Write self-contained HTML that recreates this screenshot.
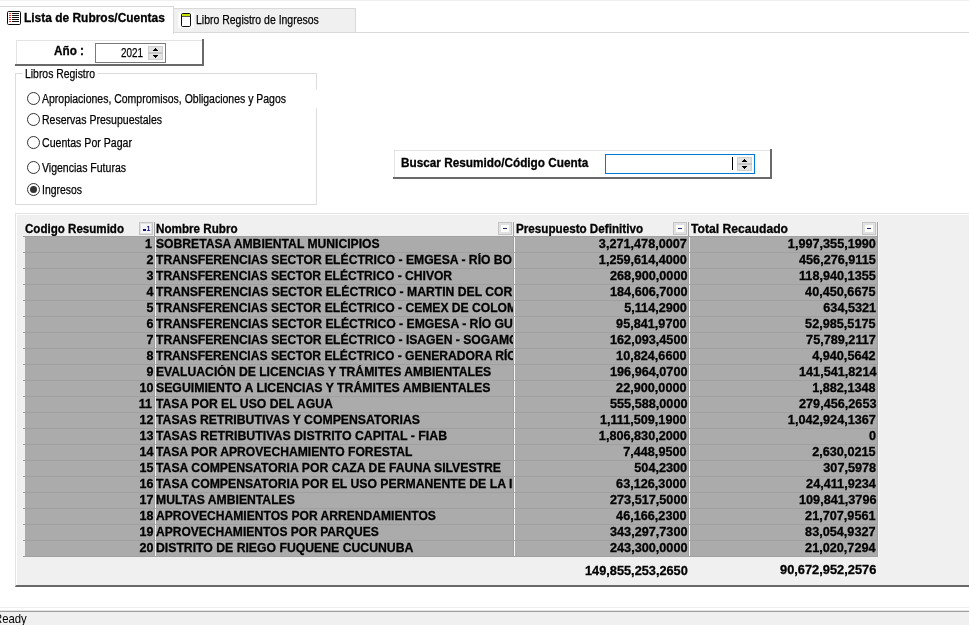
<!DOCTYPE html>
<html lang="es"><head><meta charset="utf-8"><title>Lista de Rubros/Cuentas</title>
<style>
*{box-sizing:border-box;margin:0;padding:0}
html,body{width:969px;height:625px;overflow:hidden;background:#fff}
body{font-family:"Liberation Sans",Arial,sans-serif;font-size:12.5px;color:#000;line-height:15px}
#app{position:absolute;left:0;top:0;width:969px;height:625px;overflow:hidden;background:#fff;will-change:transform}
.abs{position:absolute}
.b{font-weight:bold}
.t{position:absolute;white-space:nowrap;transform-origin:0 0;-webkit-text-stroke:0.25px #000}
.t.b{-webkit-text-stroke:0.3px #000}
#t_ready{font-size:13px;-webkit-text-stroke:0}
svg{position:absolute;shape-rendering:crispEdges}
#topstrip{left:0;top:0;width:969px;height:1px;background:#f0f0f0}
#topline{left:0;top:6px;width:174px;height:1px;background:#d9d9d9}
#tabline{left:0;top:32px;width:969px;height:1px;background:#d9d9d9}
#tab1{left:0;top:7px;width:174px;height:27px;background:#fff;border-right:1px solid #d9d9d9}
#tab2{left:174px;top:8px;width:182px;height:25px;background:#f0f0f0;border:1px solid #d9d9d9;border-left:none}
#anio{left:15px;top:39px;width:189px;height:27px;background:#fff;border-right:2px solid #696969;border-bottom:2px solid #696969}
.pnl::before{content:"";position:absolute;left:1px;top:1px;right:0;bottom:0;border-left:1px solid #e3e3e3;border-top:1px solid #e3e3e3}
#spin1{left:95px;top:43px;width:71px;height:20px;border:1px solid #7a7a7a;background:#fff}
#grp{left:15px;top:73px;width:302px;height:132px;border:1px solid #dcdcdc;background:#fff}
.radio{position:absolute;width:13px;height:13px;border:1px solid #333;border-radius:50%;background:#fff}
.radio.on::after{content:"";position:absolute;left:2px;top:2px;width:7px;height:7px;border-radius:50%;background:#333}
#srch{left:393px;top:149px;width:379px;height:30px;background:#fff;border-right:2px solid #696969;border-bottom:2px solid #696969}
#spin2{left:605px;top:154px;width:150px;height:20px;border:1px solid #0078d7;background:#fff}
#gp{left:15px;top:213px;width:960px;height:374px;background:#f0f0f0;border-top:1px solid #e3e3e3;border-left:1px solid #e3e3e3;border-bottom:2px solid #696969;box-shadow:inset 1px 1px 0 #fff}
.r{position:absolute;left:23px;width:854px;height:16px;border-top:1px solid #a0a0a0;font-weight:bold;-webkit-text-stroke:0.3px #000}
#rend{position:absolute;left:23px;top:556px;width:854px;height:1px;background:#a0a0a0}
.c{position:absolute;top:0;height:15px;background:#ababab;overflow:hidden;white-space:nowrap;line-height:15px;text-align:right;padding-right:1px}
.c1{left:2px;width:129px;padding-right:0.6px}
.c1.e1{padding-right:2px}
.c2{left:133px;width:357px;text-align:left;padding-left:0.4px;padding-right:0}
.c3{left:492px;width:173px}
.c4{left:667px;width:187px}
.sl{display:inline-block;transform-origin:0 0}
.sr{display:inline-block;transform-origin:100% 0}
.vg{position:absolute;top:222px;height:335px;width:1px;background:#a0a0a0}
.vw{position:absolute;top:237px;height:319px;width:1px;background:repeating-linear-gradient(to bottom,#f4f4f4 0,#f4f4f4 15px,#b4b4b4 15px,#b4b4b4 16px)}
.hb{position:absolute;top:222px;width:14px;height:13px;border:1px solid #c4c4c4;background:#e1e1e1}
.hb i{position:absolute;left:2px;top:2px;width:8px;height:7px;background:#fff}
.hb b{position:absolute;left:4px;top:5px;width:4px;height:1px;background:#1c2a6e}
.hb span{position:absolute;left:6.5px;top:1px;font-size:7px;line-height:9px;font-weight:bold;color:#10107a}
.hb u{position:absolute;left:3px;top:6px;width:3px;height:2px;background:#10107a}
#st1{left:0;top:607px;width:969px;height:1px;background:#efefef}
#st2{left:0;top:610px;width:969px;height:1px;background:#e4e4e4}
#st3{left:0;top:611px;width:969px;height:1px;background:#a0a0a0}
#status{left:0;top:612px;width:969px;height:13px;background:#f0f0f0}
</style></head><body><div id="app">
<div id="topstrip" class="abs"></div>
<div id="topline" class="abs"></div>
<div id="tabline" class="abs"></div>
<div id="tab1" class="abs"></div>
<div id="tab2" class="abs"></div>
<svg style="left:6px;top:10px" width="16" height="16" viewBox="0 0 16 16">
<rect x="1.5" y="1.5" width="13" height="13" rx="1.1" fill="#fff" stroke="#0a0a0a" stroke-width="1" shape-rendering="geometricPrecision"/>
<path d="M6 3h7v1h-7zM6 5h7v1h-7zM6 7h7v1h-7zM6 9h7v1h-7zM6 11h7v1h-7z" fill="#111"/>
<path d="M3 3h2v1h-2zM3 5h2v1h-2zM3 7h2v1h-2zM3 9h2v1h-2zM3 11h2v1h-2z" fill="#e8241a"/>
</svg>
<div class="t b" id="t_tab1" style="left:24.2px;top:11px;transform:scaleX(0.9562)">Lista de Rubros/Cuentas</div>
<div class="abs" style="left:178px;top:12px;width:16px;height:16px;background:#fbfbfb"></div>
<svg style="left:180px;top:12px" width="12" height="16" viewBox="0 0 12 16">
<rect x="1.5" y="1.5" width="9" height="13" rx="1.1" fill="#fff" stroke="#0a0a0a" stroke-width="1" shape-rendering="geometricPrecision"/>
<rect x="2" y="2" width="8" height="2" fill="#c3e000"/>
<rect x="2" y="4" width="8" height="1" fill="#555"/>
</svg>
<div class="t" id="t_tab2" style="left:196.2px;top:13px;transform:scaleX(0.8376)">Libro Registro de Ingresos</div>

<div id="anio" class="abs pnl"></div>
<div class="t b" id="t_anio" style="left:54px;top:44px;transform:scaleX(0.9393)">Año :</div>
<div id="spin1" class="abs"></div>
<div class="t" id="t_y2021" style="left:121px;top:46px;transform:scaleX(0.7910)">2021</div>
<svg style="left:148px;top:46px" width="15" height="14" viewBox="0 0 15 14">
<rect x="0" y="0" width="15" height="14" fill="#e3e3e3"/>
<rect x="0.5" y="0.5" width="14" height="13" fill="none" stroke="#d0d0d0"/>
<rect x="0" y="6" width="15" height="2" fill="#c6c6c6"/>
<path d="M7 2h1v1h-1zM6 3h3v1h-3zM5 4h5v1h-5zM5 9h5v1h-5zM6 10h3v1h-3zM7 11h1v1h-1z" fill="#000"/>
</svg>

<div id="grp" class="abs"></div>
<div class="abs" style="left:23px;top:70px;width:74px;height:8px;background:#fff"></div>
<div class="t" id="t_grp" style="left:25px;top:67px;transform:scaleX(0.8326)">Libros Registro</div>
<div class="abs" style="left:40px;top:89px;width:280px;height:19px;background:#fff"></div>
<div class="radio" style="left:27px;top:92px"></div>
<div class="t" id="t_r1" style="left:42px;top:92px;transform:scaleX(0.8381)">Apropiaciones, Compromisos, Obligaciones y Pagos</div>
<div class="radio" style="left:27px;top:113px"></div>
<div class="t" id="t_r2" style="left:42px;top:113px;transform:scaleX(0.8425)">Reservas Presupuestales</div>
<div class="radio" style="left:27px;top:136px"></div>
<div class="t" id="t_r3" style="left:42px;top:136px;transform:scaleX(0.8466)">Cuentas Por Pagar</div>
<div class="radio" style="left:27px;top:161px"></div>
<div class="t" id="t_r4" style="left:42px;top:161px;transform:scaleX(0.8414)">Vigencias Futuras</div>
<div class="radio on" style="left:27px;top:183px"></div>
<div class="t" id="t_r5" style="left:42px;top:183px;transform:scaleX(0.8341)">Ingresos</div>

<div id="srch" class="abs pnl"></div>
<div class="t b" id="t_srch" style="left:400.8px;top:156px;transform:scaleX(0.9424)">Buscar Resumido/Código Cuenta</div>
<div id="spin2" class="abs"></div>
<div class="abs" style="left:732px;top:157px;width:1px;height:13px;background:#000"></div>
<svg style="left:737px;top:157px" width="15" height="14" viewBox="0 0 15 14">
<rect x="0" y="0" width="15" height="14" fill="#e3e3e3"/>
<rect x="0.5" y="0.5" width="14" height="13" fill="none" stroke="#d0d0d0"/>
<rect x="0" y="6" width="15" height="2" fill="#c6c6c6"/>
<path d="M7 2h1v1h-1zM6 3h3v1h-3zM5 4h5v1h-5zM5 9h5v1h-5zM6 10h3v1h-3zM7 11h1v1h-1z" fill="#000"/>
</svg>

<div id="gp" class="abs"></div>
<div class="t b" id="t_h1" style="left:25px;top:222px;transform:scaleX(0.9256)">Codigo Resumido</div>
<div class="hb" style="left:139px"><i style="background:#f6f6f6;left:1px;top:1px;width:10px;height:9px"></i><u></u><span>1</span></div>
<div class="t b" id="t_h2" style="left:156.4px;top:222px;transform:scaleX(0.9326)">Nombre Rubro</div>
<div class="hb" style="left:498px"><i></i><b></b></div>
<div class="t b" id="t_h3" style="left:516px;top:222px;transform:scaleX(0.9329)">Presupuesto Definitivo</div>
<div class="hb" style="left:673px"><i></i><b></b></div>
<div class="t b" id="t_h4" style="left:691px;top:222px;transform:scaleX(0.9721)">Total Recaudado</div>
<div class="hb" style="left:862px"><i></i><b></b></div>
<div class="r" style="top:236px"><div class="c c1 e1"><span class="sr" style="transform:scaleX(1.0)">1</span></div><div class="c c2"><span class="sl" style="transform:scaleX(0.9707)">SOBRETASA AMBIENTAL MUNICIPIOS</span></div><div class="c c3"><span class="sr" style="transform:scaleX(1.013)">3,271,478,0007</span></div><div class="c c4"><span class="sr" style="transform:scaleX(1.013)">1,997,355,1990</span></div></div>
<div class="r" style="top:252px"><div class="c c1"><span class="sr" style="transform:scaleX(1.0)">2</span></div><div class="c c2"><span class="sl" style="transform:scaleX(0.9709)">TRANSFERENCIAS SECTOR ELÉCTRICO - EMGESA - RÍO BO</span></div><div class="c c3"><span class="sr" style="transform:scaleX(1.013)">1,259,614,4000</span></div><div class="c c4"><span class="sr" style="transform:scaleX(1.013)">456,276,9115</span></div></div>
<div class="r" style="top:268px"><div class="c c1"><span class="sr" style="transform:scaleX(1.0)">3</span></div><div class="c c2"><span class="sl" style="transform:scaleX(0.9675)">TRANSFERENCIAS SECTOR ELÉCTRICO - CHIVOR</span></div><div class="c c3"><span class="sr" style="transform:scaleX(1.013)">268,900,0000</span></div><div class="c c4"><span class="sr" style="transform:scaleX(1.013)">118,940,1355</span></div></div>
<div class="r" style="top:284px"><div class="c c1"><span class="sr" style="transform:scaleX(1.0)">4</span></div><div class="c c2"><span class="sl" style="transform:scaleX(0.9750)">TRANSFERENCIAS SECTOR ELÉCTRICO - MARTIN DEL CORRAL</span></div><div class="c c3"><span class="sr" style="transform:scaleX(1.013)">184,606,7000</span></div><div class="c c4"><span class="sr" style="transform:scaleX(1.013)">40,450,6675</span></div></div>
<div class="r" style="top:300px"><div class="c c1"><span class="sr" style="transform:scaleX(1.0)">5</span></div><div class="c c2"><span class="sl" style="transform:scaleX(0.9688)">TRANSFERENCIAS SECTOR ELÉCTRICO - CEMEX DE COLOMBIA</span></div><div class="c c3"><span class="sr" style="transform:scaleX(1.013)">5,114,2900</span></div><div class="c c4"><span class="sr" style="transform:scaleX(1.013)">634,5321</span></div></div>
<div class="r" style="top:316px"><div class="c c1"><span class="sr" style="transform:scaleX(1.0)">6</span></div><div class="c c2"><span class="sl" style="transform:scaleX(0.9732)">TRANSFERENCIAS SECTOR ELÉCTRICO - EMGESA - RÍO GUAVIO</span></div><div class="c c3"><span class="sr" style="transform:scaleX(1.013)">95,841,9700</span></div><div class="c c4"><span class="sr" style="transform:scaleX(1.013)">52,985,5175</span></div></div>
<div class="r" style="top:332px"><div class="c c1"><span class="sr" style="transform:scaleX(1.0)">7</span></div><div class="c c2"><span class="sl" style="transform:scaleX(0.9707)">TRANSFERENCIAS SECTOR ELÉCTRICO - ISAGEN - SOGAMOSO</span></div><div class="c c3"><span class="sr" style="transform:scaleX(1.013)">162,093,4500</span></div><div class="c c4"><span class="sr" style="transform:scaleX(1.013)">75,789,2117</span></div></div>
<div class="r" style="top:348px"><div class="c c1"><span class="sr" style="transform:scaleX(1.0)">8</span></div><div class="c c2"><span class="sl" style="transform:scaleX(0.9674)">TRANSFERENCIAS SECTOR ELÉCTRICO - GENERADORA RÍO</span></div><div class="c c3"><span class="sr" style="transform:scaleX(1.013)">10,824,6600</span></div><div class="c c4"><span class="sr" style="transform:scaleX(1.013)">4,940,5642</span></div></div>
<div class="r" style="top:364px"><div class="c c1"><span class="sr" style="transform:scaleX(1.0)">9</span></div><div class="c c2"><span class="sl" style="transform:scaleX(0.9731)">EVALUACIÓN DE LICENCIAS Y TRÁMITES AMBIENTALES</span></div><div class="c c3"><span class="sr" style="transform:scaleX(1.013)">196,964,0700</span></div><div class="c c4"><span class="sr" style="transform:scaleX(1.013)">141,541,8214</span></div></div>
<div class="r" style="top:380px"><div class="c c1"><span class="sr" style="transform:scaleX(1.0)">10</span></div><div class="c c2"><span class="sl" style="transform:scaleX(0.9813)">SEGUIMIENTO A LICENCIAS Y TRÁMITES AMBIENTALES</span></div><div class="c c3"><span class="sr" style="transform:scaleX(1.013)">22,900,0000</span></div><div class="c c4"><span class="sr" style="transform:scaleX(1.013)">1,882,1348</span></div></div>
<div class="r" style="top:396px"><div class="c c1 e1"><span class="sr" style="transform:scaleX(1.0)">11</span></div><div class="c c2"><span class="sl" style="transform:scaleX(0.9765)">TASA POR EL USO DEL AGUA</span></div><div class="c c3"><span class="sr" style="transform:scaleX(1.013)">555,588,0000</span></div><div class="c c4"><span class="sr" style="transform:scaleX(1.013)">279,456,2653</span></div></div>
<div class="r" style="top:412px"><div class="c c1"><span class="sr" style="transform:scaleX(1.0)">12</span></div><div class="c c2"><span class="sl" style="transform:scaleX(0.9796)">TASAS RETRIBUTIVAS Y COMPENSATORIAS</span></div><div class="c c3"><span class="sr" style="transform:scaleX(1.013)">1,111,509,1900</span></div><div class="c c4"><span class="sr" style="transform:scaleX(1.013)">1,042,924,1367</span></div></div>
<div class="r" style="top:428px"><div class="c c1"><span class="sr" style="transform:scaleX(1.0)">13</span></div><div class="c c2"><span class="sl" style="transform:scaleX(0.9878)">TASAS RETRIBUTIVAS DISTRITO CAPITAL - FIAB</span></div><div class="c c3"><span class="sr" style="transform:scaleX(1.013)">1,806,830,2000</span></div><div class="c c4"><span class="sr" style="transform:scaleX(1.013)">0</span></div></div>
<div class="r" style="top:444px"><div class="c c1"><span class="sr" style="transform:scaleX(1.0)">14</span></div><div class="c c2"><span class="sl" style="transform:scaleX(0.9702)">TASA POR APROVECHAMIENTO FORESTAL</span></div><div class="c c3"><span class="sr" style="transform:scaleX(1.013)">7,448,9500</span></div><div class="c c4"><span class="sr" style="transform:scaleX(1.013)">2,630,0215</span></div></div>
<div class="r" style="top:460px"><div class="c c1"><span class="sr" style="transform:scaleX(1.0)">15</span></div><div class="c c2"><span class="sl" style="transform:scaleX(0.9779)">TASA COMPENSATORIA POR CAZA DE FAUNA SILVESTRE</span></div><div class="c c3"><span class="sr" style="transform:scaleX(1.013)">504,2300</span></div><div class="c c4"><span class="sr" style="transform:scaleX(1.013)">307,5978</span></div></div>
<div class="r" style="top:476px"><div class="c c1"><span class="sr" style="transform:scaleX(1.0)">16</span></div><div class="c c2"><span class="sl" style="transform:scaleX(0.9778)">TASA COMPENSATORIA POR EL USO PERMANENTE DE LA INFRAESTRUCTURA</span></div><div class="c c3"><span class="sr" style="transform:scaleX(1.013)">63,126,3000</span></div><div class="c c4"><span class="sr" style="transform:scaleX(1.013)">24,411,9234</span></div></div>
<div class="r" style="top:492px"><div class="c c1"><span class="sr" style="transform:scaleX(1.0)">17</span></div><div class="c c2"><span class="sl" style="transform:scaleX(0.9735)">MULTAS AMBIENTALES</span></div><div class="c c3"><span class="sr" style="transform:scaleX(1.013)">273,517,5000</span></div><div class="c c4"><span class="sr" style="transform:scaleX(1.013)">109,841,3796</span></div></div>
<div class="r" style="top:508px"><div class="c c1"><span class="sr" style="transform:scaleX(1.0)">18</span></div><div class="c c2"><span class="sl" style="transform:scaleX(0.9672)">APROVECHAMIENTOS POR ARRENDAMIENTOS</span></div><div class="c c3"><span class="sr" style="transform:scaleX(1.013)">46,166,2300</span></div><div class="c c4"><span class="sr" style="transform:scaleX(1.013)">21,707,9561</span></div></div>
<div class="r" style="top:524px"><div class="c c1"><span class="sr" style="transform:scaleX(1.0)">19</span></div><div class="c c2"><span class="sl" style="transform:scaleX(0.9624)">APROVECHAMIENTOS POR PARQUES</span></div><div class="c c3"><span class="sr" style="transform:scaleX(1.013)">343,297,7300</span></div><div class="c c4"><span class="sr" style="transform:scaleX(1.013)">83,054,9327</span></div></div>
<div class="r" style="top:540px"><div class="c c1"><span class="sr" style="transform:scaleX(1.0)">20</span></div><div class="c c2"><span class="sl" style="transform:scaleX(0.9784)">DISTRITO DE RIEGO FUQUENE CUCUNUBA</span></div><div class="c c3"><span class="sr" style="transform:scaleX(1.013)">243,300,0000</span></div><div class="c c4"><span class="sr" style="transform:scaleX(1.013)">21,020,7294</span></div></div>
<div id="rend"></div>
<div class="vg" style="left:154px"></div><div class="vw" style="left:155px"></div>
<div class="vg" style="left:513px"></div><div class="vw" style="left:514px"></div>
<div class="vg" style="left:688px"></div><div class="vw" style="left:689px"></div>
<div class="vg" style="left:877px"></div><div class="vw" style="left:878px;top:222px;height:335px;background:#f8f8f8"></div>
<div class="t b" id="t_tot1" style="left:584.6px;top:564px;transform:scaleX(1.0199)">149,855,253,2650</div>
<div class="t b" id="t_tot2" style="left:780.3px;top:563px;transform:scaleX(1.0262)">90,672,952,2576</div>

<div id="st1" class="abs"></div>
<div id="st2" class="abs"></div>
<div id="st3" class="abs"></div>
<div id="status" class="abs"></div>
<div class="t" id="t_ready" style="left:-6.4px;top:611px;transform:scaleX(0.8728)">Ready</div>
</div></body></html>
